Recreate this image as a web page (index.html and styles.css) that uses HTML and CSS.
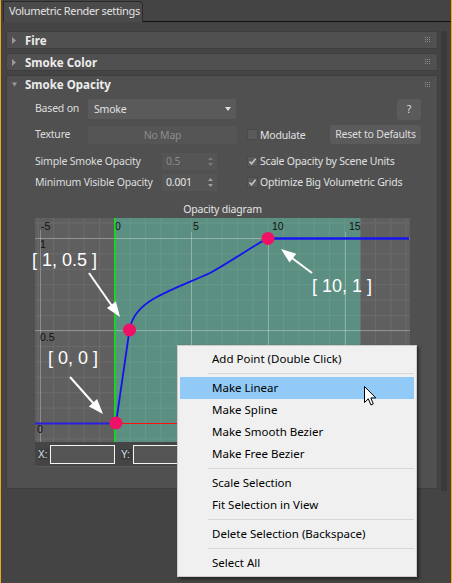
FILE: index.html
```html
<!DOCTYPE html>
<html>
<head>
<meta charset="utf-8">
<title>Volumetric Render settings</title>
<link rel="stylesheet" href="styles.css">
</head>
<body>
<div class="window">
  <div class="tabbar">
    <div class="tab">Volumetric Render settings</div>
    <div class="tabfill"></div>
  </div>
  <div class="main">
    <div class="rollouts">
      <div class="rollout">
        <div class="rhead">
          <svg class="tri" width="5" height="7" viewBox="0 0 5 7"><polygon points="0,0 4,3.5 0,7" fill="#9a9a9a"/></svg>
          <span class="rtitle">Fire</span>
          <svg class="grip" width="6" height="6" viewBox="0 0 6 6"><g fill="#8c8c8c"><rect x="0" y="0" width="1" height="1"/><rect x="2" y="0" width="1" height="1"/><rect x="4" y="0" width="1" height="1"/><rect x="0" y="2" width="1" height="1"/><rect x="2" y="2" width="1" height="1"/><rect x="4" y="2" width="1" height="1"/><rect x="0" y="4" width="1" height="1"/><rect x="2" y="4" width="1" height="1"/><rect x="4" y="4" width="1" height="1"/></g></svg>
        </div>
      </div>
      <div class="rollout">
        <div class="rhead">
          <svg class="tri" width="5" height="7" viewBox="0 0 5 7"><polygon points="0,0 4,3.5 0,7" fill="#9a9a9a"/></svg>
          <span class="rtitle">Smoke Color</span>
          <svg class="grip" width="6" height="6" viewBox="0 0 6 6"><g fill="#8c8c8c"><rect x="0" y="0" width="1" height="1"/><rect x="2" y="0" width="1" height="1"/><rect x="4" y="0" width="1" height="1"/><rect x="0" y="2" width="1" height="1"/><rect x="2" y="2" width="1" height="1"/><rect x="4" y="2" width="1" height="1"/><rect x="0" y="4" width="1" height="1"/><rect x="2" y="4" width="1" height="1"/><rect x="4" y="4" width="1" height="1"/></g></svg>
        </div>
      </div>
      <div class="rollout open">
        <div class="rhead">
          <svg class="tri" width="5" height="7" viewBox="0 0 5 7"><polygon points="0,1.5 5,1.5 2.5,5.5" fill="#9a9a9a"/></svg>
          <span class="rtitle">Smoke Opacity</span>
          <svg class="grip" width="6" height="6" viewBox="0 0 6 6"><g fill="#8c8c8c"><rect x="0" y="0" width="1" height="1"/><rect x="2" y="0" width="1" height="1"/><rect x="4" y="0" width="1" height="1"/><rect x="0" y="2" width="1" height="1"/><rect x="2" y="2" width="1" height="1"/><rect x="4" y="2" width="1" height="1"/><rect x="0" y="4" width="1" height="1"/><rect x="2" y="4" width="1" height="1"/><rect x="4" y="4" width="1" height="1"/></g></svg>
        </div>
        <div class="rbody">
          <div class="row row1">
            <span class="lbl lbl-short">Based on</span>
            <div class="dropdown">Smoke<svg class="dd-arrow" width="6" height="4" viewBox="0 0 6 4"><polygon points="0,0 6,0 3,4" fill="#e0e0e0"/></svg></div>
            <div class="btn help">?</div>
          </div>
          <div class="row row2">
            <span class="lbl lbl-short">Texture</span>
            <div class="btn nomap">No Map</div>
            <span class="chk chk-first"></span><span class="chklbl">Modulate</span>
            <div class="btn reset">Reset to Defaults</div>
          </div>
          <div class="row row3">
            <span class="lbl lbl-long">Simple Smoke Opacity</span>
            <div class="spin disabled">0.5<svg class="spin-arrows" width="5" height="9" viewBox="0 0 5 9"><polygon points="0,3 5,3 2.5,0" /><polygon points="0,6 5,6 2.5,9"/></svg></div>
            <span class="chk checked chk-spin"><svg width="9" height="9" viewBox="0 0 9 9"><path d="M1.5 4.5 L3.6 6.8 L7.6 1.8" fill="none" stroke="#c4c4c4" stroke-width="1.6"/></svg></span><span class="chklbl">Scale Opacity by Scene Units</span>
          </div>
          <div class="row row4">
            <span class="lbl lbl-long">Minimum Visible Opacity</span>
            <div class="spin">0.001<svg class="spin-arrows" width="5" height="9" viewBox="0 0 5 9"><polygon points="0,3 5,3 2.5,0" /><polygon points="0,6 5,6 2.5,9"/></svg></div>
            <span class="chk checked chk-spin"><svg width="9" height="9" viewBox="0 0 9 9"><path d="M1.5 4.5 L3.6 6.8 L7.6 1.8" fill="none" stroke="#c4c4c4" stroke-width="1.6"/></svg></span><span class="chklbl">Optimize Big Volumetric Grids</span>
          </div>
          <div class="dtitle">Opacity diagram</div>
          <div class="diagram">
            <svg class="graph" width="375" height="224" viewBox="0 0 375 224">
              <defs>
                <pattern id="minor" x="2.6" y="4.58" width="15.34" height="15.42" patternUnits="userSpaceOnUse">
                  <path d="M0.5 0V15.42M0 0.5H15.34" stroke="#ffffff" stroke-opacity="0.07" stroke-width="1" fill="none"/>
                </pattern>
              </defs>
              <rect x="0" y="0" width="375" height="224" fill="#5f5f5f"/>
              <rect x="79.3" y="0" width="246" height="224" fill="#5b8f82"/>
              <rect x="0" y="0" width="375" height="224" fill="url(#minor)"/>
              <g stroke="#ffffff" stroke-opacity="0.28" stroke-width="1">
                <line x1="5.5" y1="12" x2="5.5" y2="224"/>
                <line x1="156.5" y1="14" x2="156.5" y2="224"/>
                <line x1="233.5" y1="14" x2="233.5" y2="224"/>
                <line x1="310.5" y1="14" x2="310.5" y2="224"/>
                <line x1="0" y1="20.5" x2="375" y2="20.5"/>
                <line x1="0" y1="112.5" x2="375" y2="112.5"/>
                <line x1="0" y1="205.5" x2="375" y2="205.5"/>
              </g>
              <g class="axis">
                <text x="6" y="12">-5</text>
                <text x="80" y="12">0</text>
                <text x="158" y="12">5</text>
                <text x="237" y="12">10</text>
                <text x="314" y="12">15</text>
                <text x="5" y="30">1</text>
                <text x="5" y="123">0.5</text>
                <text x="2" y="215">0</text>
              </g>
              <line x1="79.8" y1="0" x2="79.8" y2="224" stroke="#00ee00" stroke-width="1.5"/>
              <line x1="81" y1="205.5" x2="375" y2="205.5" stroke="#ff1010" stroke-width="1.2"/>
              <line x1="0" y1="205.5" x2="81" y2="205.5" stroke="#2a1ee0" stroke-width="2"/>
              <path d="M81 205 L94.5 112 C96.5 99 104 89 120 80 C140 69 158 63 175 55 C195 44 218 28 233 20" fill="none" stroke="#1414f0" stroke-width="1.8"/>
              <line x1="233" y1="20.5" x2="374" y2="20.5" stroke="#1414f0" stroke-width="2.4"/>
              <g fill="#ee1166">
                <circle cx="81" cy="205" r="6.5"/>
                <circle cx="94.5" cy="112" r="6.5"/>
                <circle cx="233" cy="20.5" r="6.5"/>
              </g>
              <g class="annot">
                <text x="-3" y="48">[ 1, 0.5 ]</text>
                <text x="13" y="146">[ 0, 0 ]</text>
                <text x="277" y="74">[ 10, 1 ]</text>
              </g>
              <g stroke="#ffffff" stroke-width="2" fill="#ffffff">
                <line x1="54" y1="55" x2="77" y2="88"/>
                <polygon points="85,99 71.9,89.9 80.9,83.5" stroke="none"/>
                <line x1="35" y1="159" x2="59" y2="186"/>
                <polygon points="68,196 53.9,188.5 62.1,181.1" stroke="none"/>
                <line x1="277" y1="55" x2="257" y2="40"/>
                <polygon points="246,31 261.3,35.8 254.5,44.6" stroke="none"/>
              </g>
            </svg>
            <div class="coords">
              <span class="clbl">X:</span><span class="cbox"></span>
              <span class="clbl">Y:</span><span class="cbox"></span>
            </div>
          </div>
        </div>
      </div>
    </div>
    <div class="scrollbar"></div>
  </div>

  <div class="menu">
    <div class="mi">Add Point (Double Click)</div>
    <div class="msep"></div>
    <div class="mi active">Make Linear</div>
    <div class="mi">Make Spline</div>
    <div class="mi">Make Smooth Bezier</div>
    <div class="mi">Make Free Bezier</div>
    <div class="msep"></div>
    <div class="mi">Scale Selection</div>
    <div class="mi">Fit Selection in View</div>
    <div class="msep"></div>
    <div class="mi">Delete Selection (Backspace)</div>
    <div class="msep"></div>
    <div class="mi">Select All</div>
  </div>

  <svg class="cursor" width="14" height="21" viewBox="0 0 14 21">
    <path d="M0.5 0.5 L0.5 16.5 L4.3 12.8 L6.9 18.9 L9.3 17.9 L6.8 11.9 L11.8 11.9 Z" fill="#ffffff" stroke="#000000" stroke-width="1" stroke-linejoin="miter"/>
  </svg>
</div>
</body>
</html>
```

FILE: styles.css
```css
* { box-sizing: border-box; margin: 0; padding: 0; }
html, body { background: #444444; }
body {
  width: 452px;
  height: 583px;
  overflow: hidden;
  font-family: "Noto Sans", "Open Sans", sans-serif;
  font-size: 10.5px;
  letter-spacing: -0.2px;
  color: #dcdcdc;
}
.window {
  position: relative;
  width: 452px;
  height: 583px;
  border-left: 1px solid #f2a516;
  border-right: 1px solid #f2a516;
  background: #444444;
}
.tabbar { display: flex; align-items: flex-end; height: 22px; }
.tab {
  width: 140px;
  height: 21px;
  margin-left: 2px;
  padding-left: 5px;
  border: 1px solid #2a2a2a;
  border-bottom: none;
  border-radius: 0 4px 0 0;
  background: #4a4a4a;
  font-size: 11px;
  letter-spacing: -0.35px;
  line-height: 18px;
  color: #e2e2e2;
  white-space: nowrap;
}
.tabfill { flex: 1; height: 22px; border-bottom: 1px solid #111111; }

.main { display: flex; align-items: flex-start; padding-top: 9px; }
.rollouts { width: 432px; margin-left: 5px; display: flex; flex-direction: column; gap: 4px; }
.rollout {
  background: #505050;
  border: 1px solid #3e3e3e;
  border-radius: 2px;
}
.rhead { display: flex; align-items: center; height: 16px; padding-left: 5px; }
.open .rhead { height: 17px; }
.tri { display: block; flex: none; }
.rtitle { margin-left: 8px; font-weight: bold; font-size: 11.5px; letter-spacing: 0; color: #ececec; }
.grip { display: block; margin-left: auto; margin-right: 6px; }

.rbody { padding: 5px 16px 21px 28px; }
.row { display: flex; align-items: center; }
.row1 { height: 22px; align-items: flex-start; }
.row2 { height: 19px; margin-top: 5px; }
.row3 { height: 18px; margin-top: 8px; }
.row4 { height: 18px; margin-top: 3px; }
.lbl { flex: none; color: #dedede; white-space: nowrap; }
.lbl-short { width: 53px; line-height: 21px; }
.lbl-long { width: 127px; }
.dropdown {
  position: relative;
  width: 148px;
  height: 20px;
  margin-top: 1px;
  padding-left: 6px;
  background: #5a5a5a;
  border-radius: 2px;
  line-height: 20px;
  color: #e0e0e0;
}
.dd-arrow { position: absolute; right: 5px; top: 8px; }
.btn {
  background: #5b5b5b;
  border-radius: 3px;
  color: #dedede;
  text-align: center;
  white-space: nowrap;
}
.help { width: 24px; height: 21px; margin-left: auto; margin-top: 1px; line-height: 21px; }
.nomap { width: 149px; height: 18px; line-height: 18px; background: #555555; color: #8c8c8c; border-radius: 2px; }
.reset { width: 91px; height: 19px; line-height: 19px; margin-left: auto; }
.chk {
  flex: none;
  display: flex;
  align-items: center;
  justify-content: center;
  width: 11px;
  height: 11px;
  background: #5a5a5a;
  border: 1px solid #4a4a4a;
}
.chk-first { margin-left: 10px; }
.chk-spin { margin-left: 30px; }
.chklbl { margin-left: 2px; color: #e0e0e0; white-space: nowrap; }
.spin {
  position: relative;
  flex: none;
  width: 55px;
  height: 17px;
  padding-left: 4px;
  background: #555555;
  line-height: 17px;
  color: #e6e6e6;
}
.spin.disabled { color: #8a8a8a; }
.spin-arrows { position: absolute; right: 4px; top: 4px; fill: #a0a0a0; }
.spin.disabled .spin-arrows { fill: #7a7a7a; }

.dtitle { width: 375px; margin-top: 11px; height: 14px; line-height: 14px; text-align: center; color: #e4e4e4; }
.diagram { width: 375px; margin-top: 2px; background: #454545; border-bottom: 1px solid #5a5a5a; }
.graph { display: block; overflow: visible; }
.axis { font-family: "Liberation Sans", Arial, sans-serif; font-size: 10.5px; letter-spacing: 0; fill: #111111; }
.annot { font-family: "Liberation Sans", Arial, sans-serif; font-size: 18px; letter-spacing: 0; fill: #ffffff; }
.coords { display: flex; align-items: center; height: 24px; padding-left: 3px; }
.clbl {
  width: 11px;
  height: 11px;
  background: #3c3c3c;
  font-family: "Liberation Sans", Arial, sans-serif;
  font-size: 10px;
  letter-spacing: 0;
  line-height: 11px;
  color: #d6e2f0;
}
.cbox {
  width: 65px;
  height: 19px;
  margin-left: 1px;
  margin-right: 6px;
  background: #555555;
  border: 1px solid #f4f4f4;
}
.scrollbar { width: 6px; height: 460px; margin-left: 3px; background: #3a3a3a; }

.menu {
  position: absolute;
  left: 176px;
  top: 345px;
  width: 240px;
  height: 232px;
  padding: 2px;
  background: #f0f0f0;
  border: 1px solid #cccccc;
  box-shadow: 2px 2px 3px rgba(0, 0, 0, 0.5);
  font-family: "Noto Sans", "Open Sans", sans-serif;
  font-size: 11.5px;
  letter-spacing: 0;
  color: #000000;
}
.mi { height: 22px; line-height: 22px; padding-left: 32px; white-space: nowrap; }
.mi.active { background: #91c9f7; }
.msep { height: 7px; margin-left: 28px; padding-top: 3px; }
.msep::after { content: ""; display: block; height: 1px; background: #d7d7d7; }
.cursor { position: absolute; left: 363px; top: 386px; }
```
